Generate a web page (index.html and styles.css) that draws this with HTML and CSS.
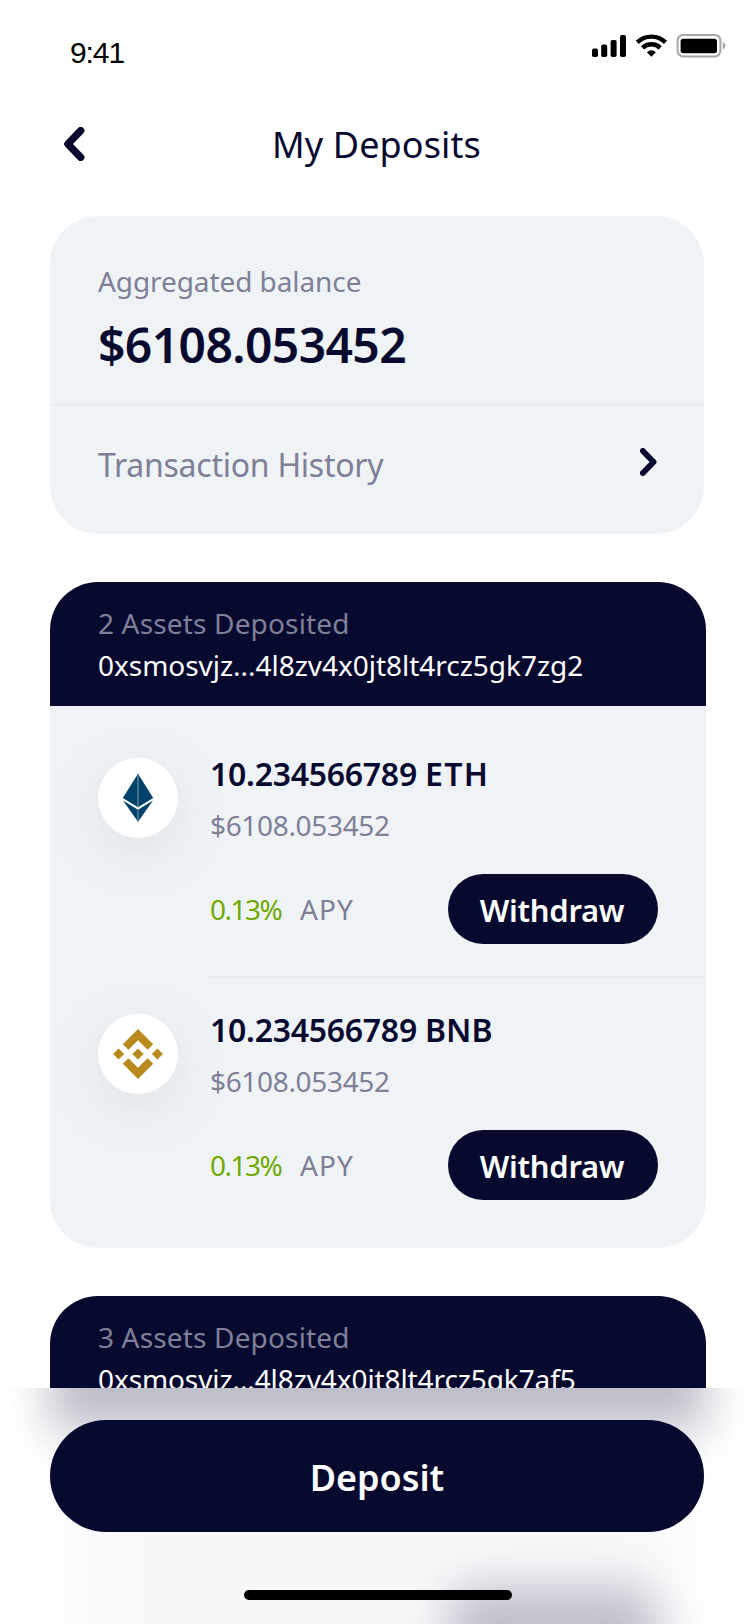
FILE: index.html
```
<!DOCTYPE html>
<html lang="en">
<head>
<meta charset="utf-8">
<title>My Deposits</title>
<link rel="stylesheet" href="styles.css">
</head>
<body>
<div class="screen">
  <div class="status">
    <span class="time">9:41</span>
    <svg class="indicators" width="134" height="24" viewBox="0 0 134 24" aria-hidden="true">
      <rect x="0" y="14.6" width="6" height="8.4" rx="1.8"/>
      <rect x="9.2" y="10.6" width="6" height="12.4" rx="1.8"/>
      <rect x="18.6" y="6" width="6" height="17" rx="1.8"/>
      <rect x="28" y="1" width="6" height="22" rx="1.8"/>
      <path class="wave" d="M45.3 8.4A20 20 0 0 1 73.5 8.4M50.6 13.9A12.6 12.6 0 0 1 68.2 13.9"/>
      <path d="M59.4 22.8L54.9 18.2Q59.4 14.3 63.9 18.2Z"/>
      <rect class="battery-shell" x="85.6" y="1" width="42.8" height="21.4" rx="5.4"/>
      <rect x="88.6" y="4.7" width="36.4" height="14.6" rx="2.8"/>
      <path class="battery-cap" d="M130.8 8Q133.4 9 133.4 11.8T130.8 15.6Z"/>
    </svg>
  </div>

  <header class="titlebar">
    <svg class="back" width="21" height="34" viewBox="0 0 21 34" aria-label="Back"><path d="M16.7 3.6L3.9 17 16.7 30.4"/></svg>
    <h1 class="title">My Deposits</h1>
  </header>

  <section class="summary">
    <div class="balance">
      <div class="balance-label">Aggregated balance</div>
      <div class="balance-value">$6108.053452</div>
    </div>
    <div class="history">
      <span class="history-label">Transaction History</span>
      <svg class="chevron" width="17" height="28" viewBox="0 0 17 28" aria-hidden="true"><path d="M2.9 2.9L13.6 14 2.9 25.1"/></svg>
    </div>
  </section>

  <section class="wallet">
    <div class="wallet-head">
      <div class="wallet-count">2 Assets Deposited</div>
      <div class="wallet-address">0xsmosvjz...4l8zv4x0jt8lt4rcz5gk7zg2</div>
    </div>
    <div class="asset">
      <div class="coin">
        <svg width="32" height="50" viewBox="0 0 32 50" aria-hidden="true">
          <g class="eth">
            <path d="M16 .8L.8 25 16 34.2 31.2 25Z"/>
            <path d="M1 27.6L16 36.8 31 27.6 16 48.8Z"/>
          </g>
          <path class="eth-ridge" d="M16 .8V34.2M16 36.8V48.8"/>
        </svg>
      </div>
      <div class="asset-body">
        <div class="amount">10.234566789 <span class="unit-eth">ETH</span></div>
        <div class="fiat">$6108.053452</div>
        <div class="actions">
          <span class="rate">0.13%</span><span class="apy">APY</span>
          <button class="withdraw">Withdraw</button>
        </div>
      </div>
    </div>
    <div class="asset">
      <div class="coin">
        <svg class="bnb" width="50" height="50" viewBox="0 0 50 50" aria-hidden="true">
          <path d="M25 0L40.2 15.2 34.6 20.8 25 11.2 15.4 20.8 9.8 15.2Z"/>
          <path d="M25 50L40.2 34.8 34.6 29.2 25 38.8 15.4 29.2 9.8 34.8Z"/>
          <path d="M5.6 19.4L11.2 25 5.6 30.6 0 25ZM25 19.4L30.6 25 25 30.6 19.4 25ZM44.4 19.4L50 25 44.4 30.6 38.8 25Z"/>
        </svg>
      </div>
      <div class="asset-body">
        <div class="amount">10.234566789 <span class="unit-bnb">BNB</span></div>
        <div class="fiat">$6108.053452</div>
        <div class="actions">
          <span class="rate">0.13%</span><span class="apy">APY</span>
          <button class="withdraw">Withdraw</button>
        </div>
      </div>
    </div>
  </section>

  <section class="wallet">
    <div class="wallet-head">
      <div class="wallet-count">3 Assets Deposited</div>
      <div class="wallet-address">0xsmosvjz...4l8zv4x0jt8lt4rcz5gk7af5</div>
    </div>
  </section>

  <footer class="dock">
    <div class="haze haze-card"></div>
    <div class="haze haze-head"></div>
    <div class="haze haze-button"></div>
    <button class="deposit">Deposit</button>
    <div class="home-indicator"></div>
  </footer>
</div>
</body>
</html>
```
FILE: styles.css
```
* { box-sizing: border-box; }

body {
  margin: 0;
  background: #fff;
  color: #08092f;
  font-family: "Noto Sans", "Open Sans", sans-serif;
}

button {
  border: 0;
  padding: 0;
  background: #08092f;
  color: #fff;
  font-family: inherit;
  font-weight: 600;
}

.screen {
  position: relative;
  width: 752px;
  height: 1624px;
  overflow: hidden;
  background: #fff;
}

.status {
  height: 121px;
  padding: 35px 26px 0 70px;
  display: flex;
  justify-content: space-between;
  align-items: flex-start;
}

.time {
  font: 30px/36px "Liberation Sans", sans-serif;
  letter-spacing: -1.1px;
  color: #000;
}

.indicators { display: block; margin-top: -1px; }
.wave { fill: none; stroke: #000; stroke-width: 4.4; }
.battery-shell { fill: none; stroke: #a6a6a6; stroke-width: 2; }
.battery-cap { fill: #a6a6a6; }

.titlebar {
  height: 95px;
  padding: 0 64px;
  display: grid;
  grid-template-columns: 20px 1fr 20px;
  align-items: start;
}

.back { margin-top: 6px; fill: none; stroke: #08092f; stroke-width: 7.4; stroke-linecap: round; stroke-linejoin: round; }

.title {
  margin: 0;
  padding-left: 1px;
  font-size: 36px;
  line-height: 48px;
  font-weight: 400;
  letter-spacing: .12px;
  text-align: center;
}

.summary {
  margin: 0 48px 48px 50px;
  height: 318px;
  border-radius: 48px;
  background: #eff3f6;
}

.balance {
  height: 190px;
  padding: 47px 48px 0;
  border-bottom: 2px solid #e9edf0;
}

.balance-label { font-size: 28px; line-height: 36px; letter-spacing: -.08px; color: #7f8097; }
.balance-value { margin: 14px 0 0 0; font-size: 48px; line-height: 64px; font-weight: 600; letter-spacing: -.6px; }

.history {
  padding: 38px 47px 0 48px;
  display: flex;
  justify-content: space-between;
  align-items: flex-start;
}

.history-label { font-size: 32px; line-height: 42px; letter-spacing: -.25px; color: #7f8097; }
.chevron { margin-top: 4px; fill: none; stroke: #08092f; stroke-width: 5.8; stroke-linecap: round; stroke-linejoin: round; }

.wallet {
  margin: 0 46px 48px 50px;
  border-radius: 48px;
  background: #eff3f6;
}

.wallet-head {
  height: 124px;
  padding: 23px 48px 0;
  border-radius: 48px 48px 0 0;
  background: #08092f;
}

.wallet-count { font-size: 28px; line-height: 36px; letter-spacing: .16px; color: #7f8097; }
.wallet-address { margin-top: 3px; font-size: 28px; line-height: 42px; letter-spacing: -.03px; color: #fff; white-space: nowrap; }
.wallet + .wallet .wallet-address { letter-spacing: -.1px; }

.asset {
  display: flex;
  padding-left: 48px;
}

.coin {
  flex: none;
  width: 80px;
  height: 80px;
  margin: 52px 32px 0 0;
  border-radius: 50%;
  display: flex;
  align-items: center;
  justify-content: center;
  background: #fff;
  box-shadow: 0 14px 80px rgba(16, 20, 32, .07), 0 14px 40px -10px rgba(16, 20, 32, .04);
}

.eth { fill: #00426a; }
.eth-ridge { fill: none; stroke: #5a87a0; stroke-width: 1.4; }
.bnb { fill: #b88a1e; }

.asset-body {
  flex: 1;
  padding: 46px 48px 32px 0;
  border-bottom: 2px solid #e9edf0;
}

.asset + .asset .coin { margin-top: 36px; }
.asset + .asset .asset-body { padding-top: 30px; padding-bottom: 48px; border-bottom: 0; }

.amount { font-size: 32px; line-height: 44px; font-weight: 600; letter-spacing: -.27px; }
.unit-eth { letter-spacing: 1.3px; }
.unit-bnb { letter-spacing: 0; }
.fiat { margin-top: 11px; font-size: 28px; line-height: 36px; letter-spacing: -.33px; color: #7f8097; }

.actions {
  margin-top: 31px;
  display: flex;
  align-items: center;
  font-size: 28px;
  line-height: 36px;
}

.rate { width: 90px; letter-spacing: -1.5px; color: #70a800; }
.apy { letter-spacing: 1.08px; color: #7f8097; }

.withdraw {
  width: 210px;
  height: 70px;
  margin-left: auto;
  padding: 2px 2px 0 0;
  border-radius: 35px;
  font-size: 31px;
  line-height: 44px;
  letter-spacing: -.3px;
}

.dock {
  position: absolute;
  left: 2px;
  right: 0;
  bottom: 0;
  height: 236px;
  padding: 32px 48px 0;
  overflow: hidden;
  background: #fff;
}

/* Frosted shapes of the list behind the dock */
.haze { position: absolute; filter: blur(22px); }
.haze-head { left: 48px; top: -92px; width: 656px; height: 134px; background: #bebec9; }
.haze-card { left: 78px; top: 42px; width: 596px; height: 300px; background: #f6f8f9; filter: blur(36px); }
.haze-button { left: 446px; top: 198px; width: 210px; height: 130px; border-radius: 30px; background: #c0c0cc; }

.deposit {
  position: relative;
  display: block;
  width: 654px;
  height: 112px;
  padding: 3px 0 0 0;
  border-radius: 56px;
  font-size: 36px;
  line-height: 48px;
  letter-spacing: -.05px;
}

.home-indicator {
  position: relative;
  width: 268px;
  height: 10px;
  margin: 58px 0 0 194px;
  border-radius: 5px;
  background: #000;
}
```
